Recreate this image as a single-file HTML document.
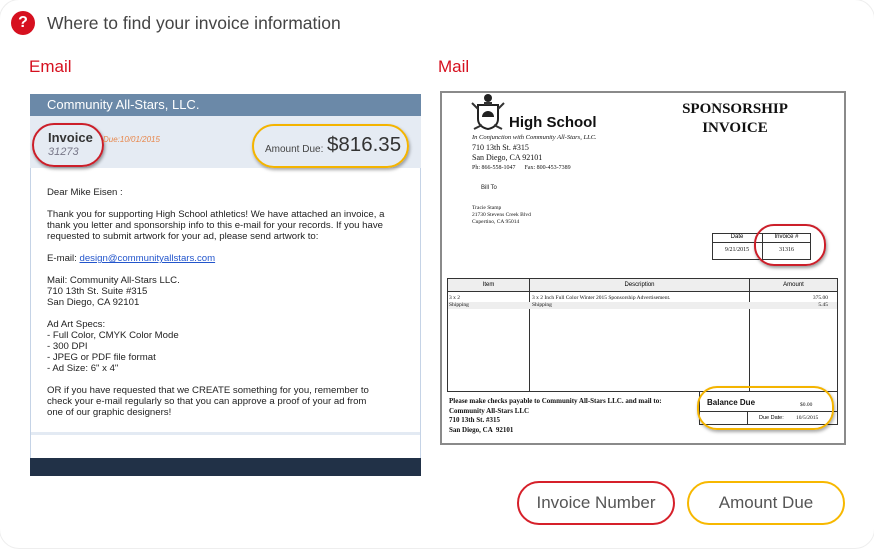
<!DOCTYPE html>
<html><head><meta charset="utf-8"><style>
*{margin:0;padding:0;box-sizing:border-box}
body{width:874px;height:548px;background:#fff;font-family:"Liberation Sans",Arial,sans-serif;position:relative;overflow:hidden}
.a{position:absolute}
.ser{font-family:"Liberation Serif",serif;color:#111}
.em p{margin-bottom:11px}
</style></head><body>
<div class="a" style="left:-1px;top:-1px;width:876px;height:550px;border:1px solid #eee;border-radius:20px"></div>
<div class="a" style="left:11px;top:11px;width:24px;height:24px;border-radius:50%;background:#d6101f;color:#fff;font-weight:bold;font-size:16px;text-align:center;line-height:24px">?</div>
<div class="a" style="left:47px;top:11px;font-size:17.5px;color:#444;line-height:24px">Where to find your invoice information</div>
<div class="a" style="left:29px;top:57px;font-size:17px;color:#d6101f">Email</div>
<div class="a" style="left:438px;top:57px;font-size:17px;color:#d6101f">Mail</div>

<!-- Email -->
<div class="a" style="left:30px;top:94px;width:391px;height:382px;border-left:1px solid #c5d3e6;border-right:1px solid #c5d3e6;background:#fff"></div>
<div class="a" style="left:30px;top:94px;width:391px;height:22px;background:#6b89a8;color:#fff;font-size:13px;line-height:22px;padding-left:17px">Community All-Stars, LLC.</div>
<div class="a" style="left:30px;top:116px;width:391px;height:52px;background:#e5ebf3"></div>
<div class="a" style="left:32px;top:123px;width:72px;height:44px;border:2px solid #cc1f2a;border-radius:22px;box-shadow:1px 2px 3px rgba(0,0,0,.4)"></div>
<div class="a" style="left:48px;top:130px;font-size:13px;font-weight:bold;color:#333">Invoice</div>
<div class="a" style="left:48px;top:146px;font-size:11px;font-style:italic;color:#778">31273</div>
<div class="a" style="left:103px;top:135px;font-size:8px;font-style:italic;color:#e8864a">Due:10/01/2015</div>
<div class="a" style="left:252px;top:124px;width:157px;height:44px;border:2px solid #f4b400;border-radius:22px;box-shadow:1px 2px 3px rgba(0,0,0,.35)"></div>
<div class="a" style="left:265px;top:144px;font-size:10px;color:#444">Amount Due:</div>
<div class="a" style="left:327px;top:133px;font-size:20.5px;color:#333">$816.35</div>
<div class="a em" style="left:47px;top:187px;width:350px;font-size:9.6px;line-height:11px;color:#222">
<p>Dear Mike Eisen :</p>
<p>Thank you for supporting High School athletics! We have attached an invoice, a thank you letter and sponsorship info to this e-mail for your records. If you have requested to submit artwork for your ad, please send artwork to:</p>
<p>E-mail: <span style="color:#2255cc;text-decoration:underline">design@communityallstars.com</span></p>
<p>Mail: Community All-Stars LLC.<br>710 13th St. Suite #315<br>San Diego, CA 92101</p>
<p>Ad Art Specs:<br>- Full Color, CMYK Color Mode<br>- 300 DPI<br>- JPEG or PDF file format<br>- Ad Size: 6" x 4"</p>
<p>OR if you have requested that we CREATE something for you, remember to<br>check your e-mail regularly so that you can approve a proof of your ad from<br>one of our graphic designers!</p>
</div>
<div class="a" style="left:31px;top:432px;width:389px;height:3px;background:#e3eaf3"></div>
<div class="a" style="left:30px;top:458px;width:391px;height:18px;background:#213147"></div>

<!-- Mail -->
<div class="a" style="left:440px;top:91px;width:406px;height:354px;border:2px solid #8a8a8a;background:#fff"></div>
<svg class="a" style="left:470px;top:93px" width="36" height="42" viewBox="0 0 36 42"><circle cx="18" cy="5" r="4" fill="#222"/><path d="M8 12h20v14c0 6-5 9-10 10-5-1-10-4-10-10z" fill="#fff" stroke="#222" stroke-width="2"/><path d="M12 24a6 6 0 0 1 12 0z" fill="#222"/><path d="M2 10l6 6M34 10l-6 6M4 36l8-4M32 36l-8-4" stroke="#333" stroke-width="2"/><rect x="14" y="9" width="8" height="3" fill="#333"/></svg>
<div class="a" style="left:509px;top:114px;font-size:15px;font-weight:bold;color:#111">High School</div>
<div class="a ser" style="left:472px;top:134px;font-size:6.5px;font-style:italic">In Conjunction with Community All-Stars, LLC.</div>
<div class="a ser" style="left:472px;top:143px;font-size:8px;line-height:10px">710 13th St. #315<br>San Diego, CA 92101</div>
<div class="a ser" style="left:472px;top:165px;font-size:6px">Ph: 866-558-1047 &nbsp;&nbsp;&nbsp;&nbsp; Fax: 800-453-7389</div>
<div class="a" style="left:481px;top:185px;font-size:6px;color:#222">Bill To</div>
<div class="a ser" style="left:472px;top:205px;font-size:5.5px;line-height:7px">Tracie Stamp<br>21730 Stevens Creek Blvd<br>Cupertino, CA 95014</div>
<div class="a ser" style="left:679px;top:100px;font-size:15px;font-weight:bold;text-align:center;width:112px;line-height:19px">SPONSORSHIP<br>INVOICE</div>
<div class="a" style="left:712px;top:233px;width:99px;height:27px;border:1px solid #333"></div>
<div class="a" style="left:712px;top:242px;width:99px;border-top:1px solid #333"></div>
<div class="a" style="left:762px;top:233px;border-left:1px solid #333;height:27px"></div>
<div class="a" style="left:712px;top:234px;width:50px;text-align:center;font-size:6px">Date</div>
<div class="a" style="left:762px;top:234px;width:49px;text-align:center;font-size:6px">Invoice #</div>
<div class="a ser" style="left:712px;top:247px;width:50px;text-align:center;font-size:6px">9/21/2015</div>
<div class="a ser" style="left:762px;top:247px;width:49px;text-align:center;font-size:6px">31316</div>
<div class="a" style="left:754px;top:224px;width:72px;height:42px;border:2px solid #cc1f2a;border-radius:20px;box-shadow:1px 2px 3px rgba(0,0,0,.4)"></div>
<!-- table -->
<div class="a" style="left:447px;top:278px;width:391px;height:114px;border:1px solid #333"></div>
<div class="a" style="left:448px;top:279px;width:389px;height:13px;background:#eee;border-bottom:1px solid #333"></div>
<div class="a" style="left:529px;top:278px;height:114px;border-left:1px solid #333"></div>
<div class="a" style="left:749px;top:278px;height:114px;border-left:1px solid #333"></div>
<div class="a" style="left:448px;top:282px;width:81px;text-align:center;font-size:6px">Item</div>
<div class="a" style="left:530px;top:282px;width:219px;text-align:center;font-size:6px">Description</div>
<div class="a" style="left:750px;top:282px;width:87px;text-align:center;font-size:6px">Amount</div>
<div class="a" style="left:448px;top:302px;width:389px;height:7px;background:#eee"></div>
<div class="a ser" style="left:449px;top:295px;font-size:5.5px;line-height:7px">3 x 2<br>Shipping</div>
<div class="a ser" style="left:532px;top:295px;font-size:5.5px;line-height:7px">3 x 2 Inch Full Color Winter 2015 Sponsorship Advertisement.<br>Shipping</div>
<div class="a ser" style="left:750px;top:295px;width:78px;text-align:right;font-size:5.5px;line-height:7px">375.00<br>5.45</div>
<div class="a ser" style="left:449px;top:397px;font-size:7px;font-weight:bold;line-height:9.5px">Please make checks payable to Community All-Stars LLC. and mail to:<br>Community All-Stars LLC<br>710 13th St. #315<br>San Diego, CA &nbsp;92101</div>
<div class="a" style="left:699px;top:392px;width:139px;height:33px;border:1px solid #333;border-top:none"></div>
<div class="a" style="left:699px;top:411px;width:139px;border-top:1px solid #333"></div>
<div class="a" style="left:747px;top:411px;height:14px;border-left:1px solid #333"></div>
<div class="a" style="left:707px;top:398px;font-size:8px;font-weight:bold;color:#111">Balance Due</div>
<div class="a ser" style="left:800px;top:402px;font-size:5.5px">$0.00</div>
<div class="a" style="left:759px;top:415px;font-size:5.5px">Due Date:</div>
<div class="a ser" style="left:796px;top:415px;font-size:5.5px">10/5/2015</div>
<div class="a" style="left:697px;top:386px;width:137px;height:44px;border:2px solid #f4b400;border-radius:20px;box-shadow:1px 2px 3px rgba(0,0,0,.35)"></div>

<!-- buttons -->
<div class="a" style="left:517px;top:481px;width:158px;height:44px;border:2px solid #d6202a;border-radius:22px;text-align:center;line-height:40px;font-size:17px;color:#555">Invoice Number</div>
<div class="a" style="left:687px;top:481px;width:158px;height:44px;border:2px solid #f7b800;border-radius:22px;text-align:center;line-height:40px;font-size:17px;color:#555">Amount Due</div>
</body></html>
